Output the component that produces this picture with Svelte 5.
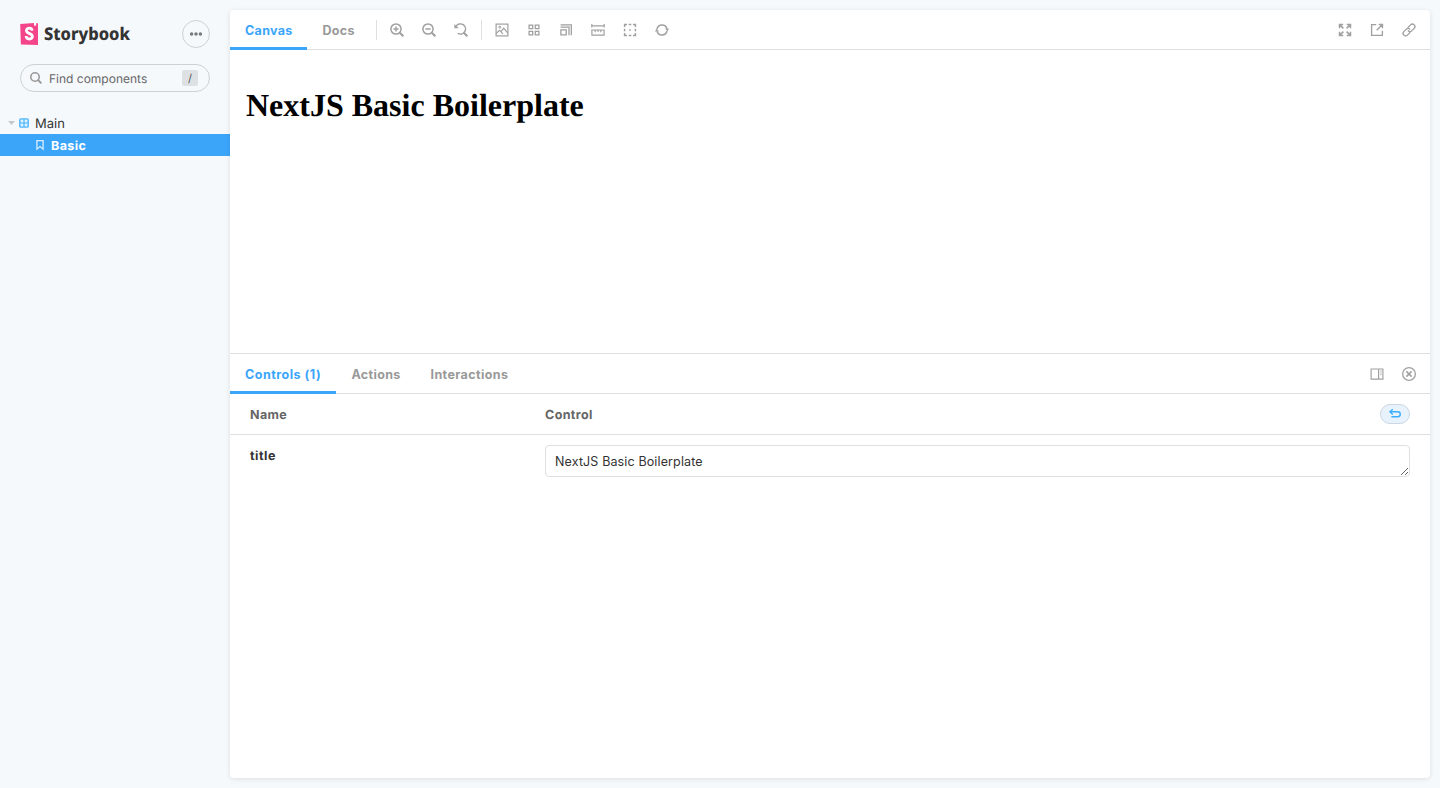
<script>
  const canvasTools = [
    ['zoomin', 'zoomout', 'zoomreset'],
    ['photo', 'grid', 'viewport', 'measure', 'outline', 'sync']
  ];
  const canvasActions = ['expand', 'share', 'link'];
  const panelActions = ['sidebar', 'close'];
  let title = $state('NextJS Basic Boilerplate');
</script>

{#snippet icon(name)}
  <svg class="icon" viewBox="0 0 14 14" fill="none" stroke="currentColor" stroke-width="1.5" aria-hidden="true">
    {#if name === 'zoomin' || name === 'zoomout'}
      <circle cx="6" cy="6" r="5.1" />
      <path d="M9.8 9.8 13.3 13.3" stroke-width="2.1" />
      <path d="M3.4 6h5.2" />
      {#if name === 'zoomin'}<path d="M6 3.4v5.2" />{/if}
    {:else if name === 'zoomreset'}
      <path d="M2.2 3.1A5.1 5.1 0 1 1 3.8 10.4" />
      <path d="M9.8 9.8 13.3 13.3" stroke-width="2.1" />
      <path d="M.4 1v4.3h4.3z" fill="currentColor" stroke="none" />
    {:else if name === 'photo'}
      <rect x="1.1" y="1.1" width="11.8" height="11.8" stroke-width="1.2" />
      <circle cx="4.8" cy="4.2" r="1" stroke-width="1" />
      <path d="m1.2 10.7 3.2-3.3 1.5 1.2 2.8-3.5 4.2 5M5.9 8.6l2 2.2" stroke-width="1.2" />
    {:else if name === 'grid'}
      <path d="M2.1 2.1h3.6v3.6H2.1zM8.3 2.1h3.6v3.6H8.3zM2.1 8.3h3.6v3.6H2.1zM8.3 8.3h3.6v3.6H8.3z" stroke-width="1.3" />
    {:else if name === 'viewport'}
      <path d="M1.6 1.9h10.7v10.3M1.6 4.2H10v8M1.9 6.8h5.3v5.1H1.9z" stroke-width="1.3" />
    {:else if name === 'measure'}
      <path d="M.8 1.1v3.5M13.2 1.1v3.5M.8 2.8h12.4M.9 7h12.2v5.1H.9zM4.1 7.2v2.1M7 7.2v1.8M9.9 7.2v2.1" stroke-width="1.2" />
    {:else if name === 'outline'}
      <path d="M1.6 4V1.6H4M5.7 1.6h2.6M10 1.6h2.4V4M12.4 5.7v2.6M12.4 10v2.4H10M8.3 12.4H5.7M4 12.4H1.6V10M1.6 8.3V5.7" />
      <path d="M6.2 7h1.6" stroke-width="1.6" />
    {:else if name === 'sync'}
      <path d="M2 6A5.15 5.15 0 0 1 11.9 5.6M12 8A5.15 5.15 0 0 1 2.1 8.4" />
      <path d="M9.8 5.4h4.2L12.6 8.2zM0 8.6 1.4 5.8 4.2 8.6z" fill="currentColor" stroke="none" />
    {:else if name === 'expand'}
      <path d="M1.5 5.2V1.5h3.7M8.8 1.5h3.7v3.7M1.5 8.8v3.7h3.7M12.5 8.8v3.7H8.8M1.6 1.6l3.8 3.8M12.4 1.6 8.6 5.4M1.6 12.4l3.8-3.8M12.4 12.4 8.6 8.6" />
    {:else if name === 'share'}
      <path d="M6.2 1.6H1.6v10.8h10.8V7.8M8.8 1.5h3.7v3.7M12.4 1.6 6.7 7.3" stroke-width="1.35" />
    {:else if name === 'link'}
      <g transform="rotate(-45 7 7)" stroke-width="1.3">
        <path d="M6.3 9.5H2.2a2.5 2.5 0 0 1 0-5h3.5a2.5 2.5 0 0 1 2.4 3" />
        <path d="M7.7 4.5h4.1a2.5 2.5 0 0 1 0 5H8.3a2.5 2.5 0 0 1-2.4-3" />
      </g>
    {:else if name === 'sidebar'}
      <path d="M1.1 2h11.8v10.1H1.1zM8.6 2v10.1" stroke-width="1.15" />
      <path d="M10.2 4h1.4M10.2 5.8h1.4M10.2 7.6h1.4" stroke-width=".8" />
    {:else if name === 'close'}
      <circle cx="7" cy="7" r="6.35" stroke-width="1.3" />
      <path d="m4.4 4.4 5.2 5.2M9.6 4.4 4.4 9.6" />
    {/if}
  </svg>
{/snippet}

<div class="app">
  <aside>
    <header class="brand">
      <svg class="logo" width="114" height="32" viewBox="0 -4 114 32">
        <path d="M.2 2 14 1.1l4 .1v21.9L.9 22.4z" fill="#f4458a" />
        <path d="m14 1.1 2.2-.2v3.1l-1.1-.8-1.1.8z" fill="#fff" />
        <path d="M12.1 8.7C12 7.1 11 6.2 9.3 6.2 7.6 6.2 6.4 7.1 6.4 8.6c0 3.4 6 2.6 6 5.7 0 1.7-1.2 2.7-3.1 2.7-2.1 0-3.2-1.1-3.2-2.9" fill="none" stroke="#fff" stroke-width="2.8" />
        <text x="24" y="18.4" textLength="86" lengthAdjust="spacingAndGlyphs">Storybook</text>
      </svg>
      <button class="menu" aria-label="Shortcuts">
        <svg width="14" height="14" viewBox="0 0 14 14" fill="currentColor"><circle cx="2.6" cy="7" r="1.75" /><circle cx="7" cy="7" r="1.75" /><circle cx="11.4" cy="7" r="1.75" /></svg>
      </button>
    </header>
    <div class="search">
      <svg width="12" height="12" viewBox="0 0 12 12" fill="none" stroke="#999" stroke-width="1.6"><circle cx="5" cy="5" r="4.2" /><path d="m8.1 8.1 3.3 3.3" stroke-width="2" /></svg>
      <span class="hint">Find components</span>
      <kbd>/</kbd>
    </div>
    <nav>
      <div class="node">
        <svg class="caret" width="7" height="4" viewBox="0 0 7 4"><path d="M0 0h7L3.5 4z" fill="#c4c8cb" /></svg>
        <svg class="component" width="10" height="10" viewBox="0 0 10 10"><rect x=".8" y=".9" width="8.4" height="8.2" rx="1.2" fill="#def1ff" stroke="#4db5ff" stroke-width="1.4" /><path d="M5 1v8M1 5h8" stroke="#4db5ff" stroke-width="1.2" /></svg>
        <span class="main">Main</span>
      </div>
      <div class="node selected">
        <svg width="8" height="10" viewBox="0 0 8 10" fill="none" stroke="#d5edff" stroke-width="1.3"><path d="M.9.7h6.2v8.5L4 6.6.9 9.2z" /></svg>
        <span class="basic">Basic</span>
      </div>
    </nav>
  </aside>

  <main>
    <div class="bar">
      <button class="tab active canvas">Canvas</button>
      <button class="tab docs">Docs</button>
      {#each canvasTools as group}
        <div class="tools">
          {#each group as name}<button class="tool" aria-label={name}>{@render icon(name)}</button>{/each}
        </div>
      {/each}
      <div class="end">
        {#each canvasActions as name}<button class="tool" aria-label={name}>{@render icon(name)}</button>{/each}
      </div>
    </div>
    <section class="preview"><h1>{title}</h1></section>
    <section class="panel">
      <div class="bar">
        <button class="tab active controls">Controls (1)</button>
        <button class="tab actions">Actions</button>
        <button class="tab interactions">Interactions</button>
        <div class="end">
          {#each panelActions as name}<button class="tool" aria-label={name}>{@render icon(name)}</button>{/each}
        </div>
      </div>
      <div class="row head">
        <span>Name</span>
        <span>Control</span>
        <button class="reset" aria-label="Reset controls">
          <svg width="12" height="12" viewBox="0 0 12 12" fill="none" stroke="#3aaefa" stroke-width="1.4"><path d="M3.8 1.2.9 3.8l2.9 2.6M1 3.8h7.8a2.4 2.4 0 0 1 0 4.9H2.4" /></svg>
        </button>
      </div>
      <div class="row">
        <span class="name">title</span>
        <textarea rows="1" spellcheck="false" bind:value={title}></textarea>
      </div>
    </section>
  </main>
</div>

<style>
  :global(body) { margin: 0; }
  * { box-sizing: border-box; }
  .app { display: flex; height: 788px; overflow: hidden; padding: 10px 10px 10px 0; background: #f6f9fc; font: 12.5px/20px Inter, "Liberation Sans", sans-serif; color: #333; text-rendering: geometricPrecision; }
  button { display: flex; align-items: center; justify-content: center; margin: 0; padding: 0; border: 0; background: none; font: inherit; color: inherit; }
  svg { display: block; flex: none; overflow: visible; }
  aside { width: 230px; flex: none; }
  .brand { display: flex; align-items: center; justify-content: space-between; padding: 10px 20px 0; height: 38px; }
  .logo text { font: 800 17.5px/24px "Noto Sans", sans-serif; fill: #333; }
  .menu { width: 28px; height: 28px; border: 1px solid #ccd1d4; border-radius: 50%; color: #777a7c; }
  .search { display: flex; align-items: center; height: 28px; margin: 16px 20px 0; padding: 0 11px 0 9px; border: 1px solid #ccd1d4; border-radius: 28px; }
  .hint { margin-left: 7px; font-size: 12px; color: #666; padding-top: 1px; }
  kbd { margin-left: auto; width: 16px; height: 16px; border-radius: 2px; background: #dde1e4; color: #555; font: 11px/16px Inter, sans-serif; text-align: center; }
  nav { margin-top: 20px; }
  .node { display: flex; align-items: center; height: 22px; padding-left: 8px; }
  .component { margin-left: 4px; }
  .main { margin-left: 6px; padding-top: 1px; font-size: 13px; }
  .selected { padding-left: 36px; background: #3ba5fa; color: #fff; font-weight: 700; }
  .basic { margin-left: 7px; padding-top: 2px; line-height: 21px; letter-spacing: .42px; }
  main { flex: 1; display: flex; flex-direction: column; background: #fff; border-radius: 4px; box-shadow: 0 1px 5px rgba(0, 0, 0, .1); overflow: hidden; }
  .bar { display: flex; align-items: center; flex: none; height: 40px; padding-right: 7px; border-bottom: 1px solid #dfdfdf; }
  .tab { height: 40px; align-self: flex-start; padding: 4px 0 0 15px; justify-content: flex-start; border-bottom: 3px solid transparent; font-weight: 700; letter-spacing: .32px; color: #999; white-space: nowrap; }
  .active { color: #3ba5fa; border-color: #3ba5fa; }
  .canvas { width: 77px; }
  .docs { width: 63px; padding-left: 15.4px; }
  .controls { width: 106px; letter-spacing: .5px; }
  .actions { width: 79px; padding-left: 15.5px; }
  .interactions { width: 108px; padding-left: 15.5px; letter-spacing: .4px; }
  .tools { display: flex; gap: 4px; height: 20px; align-items: center; margin-left: 6px; padding-left: 6px; border-left: 1px solid #dfdfdf; }
  .tools + .tools { margin-left: 6px; }
  .end { display: flex; gap: 4px; margin-left: auto; }
  .tool { width: 28px; height: 28px; color: #a0a0a0; }
  .icon { width: 14px; height: 14px; }
  .preview { flex: none; height: 303px; padding: 16px; }
  h1 { margin: 21.44px 0; font: bold 32px/37px "Liberation Serif", serif; color: #000; }
  .panel { flex: 1; border-top: 1px solid #dfdfdf; }
  .row { display: grid; grid-template-columns: 295px 1fr auto; align-items: start; padding: 10px 20px; font-weight: 700; letter-spacing: .38px; }
  .row span { padding-top: 1px; line-height: 21px; }
  .row .name { letter-spacing: .5px; }
  .head { height: 41px; border-bottom: 1px solid #dfdfdf; color: #666; }
  .reset { width: 30px; height: 20px; border: 1px solid #ccd6e0; border-radius: 20px; background: #e8f2fc; }
  textarea { display: block; width: 100%; height: 32px; margin: 0; padding: 6px 9px 4px; border: 1px solid #dfdfdf; border-radius: 4px; outline: 0; background: #fff; color: #333; font: 12.5px/20px Inter, sans-serif; letter-spacing: .13px; resize: vertical; overflow: hidden; }
</style>
